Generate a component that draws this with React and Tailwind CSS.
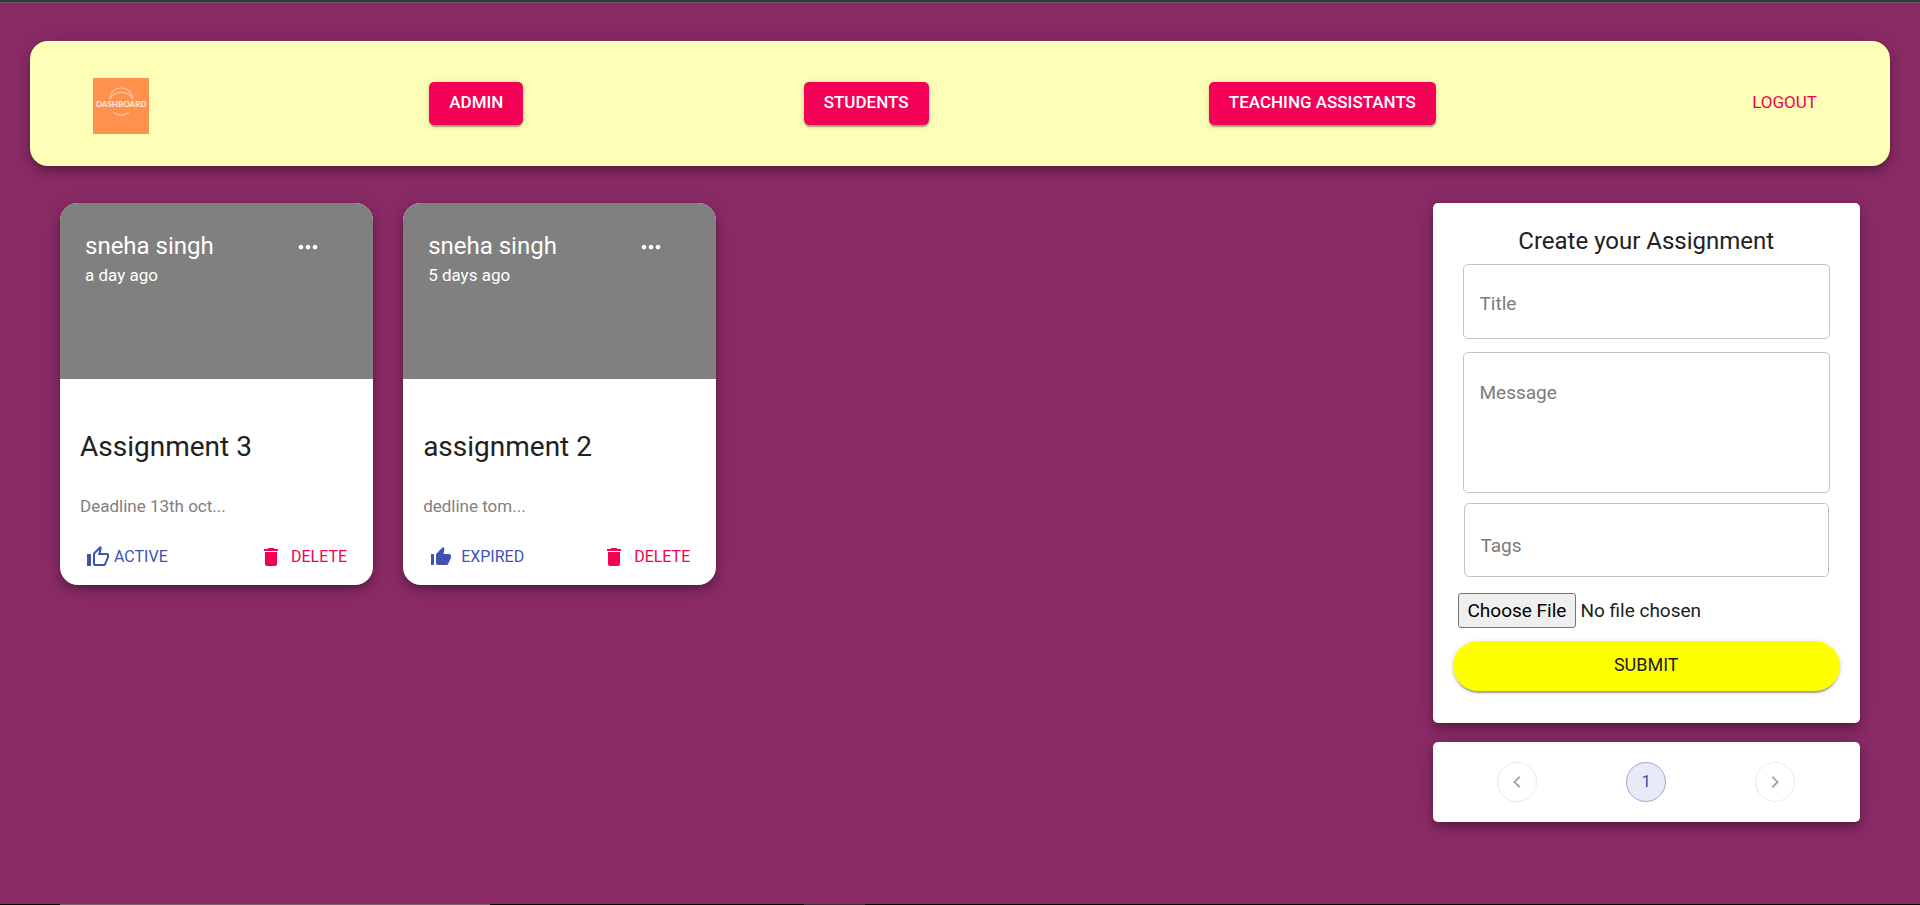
const ELEVATION =
  "shadow-[0_4px_6px_-1px_rgba(0,0,0,0.2),0_7px_12px_0_rgba(0,0,0,0.14),0_1px_22px_0_rgba(0,0,0,0.12)]";
const RAISED =
  "shadow-[0_4px_1px_-2px_rgba(0,0,0,0.2),0_2px_2px_0_rgba(0,0,0,0.14),0_1px_6px_0_rgba(0,0,0,0.12)]";

const POSTS = [
  { id: 1, author: "sneha singh", when: "a day ago", title: "Assignment 3", message: "Deadline 13th oct...", active: true },
  { id: 2, author: "sneha singh", when: "5 days ago", title: "assignment 2", message: "dedline tom...", active: false },
];

const ICONS = {
  more: "M6 10c-1.1 0-2 .9-2 2s.9 2 2 2 2-.9 2-2-.9-2-2-2zm12 0c-1.1 0-2 .9-2 2s.9 2 2 2 2-.9 2-2-.9-2-2-2zm-6 0c-1.1 0-2 .9-2 2s.9 2 2 2 2-.9 2-2-.9-2-2-2z",
  thumbOutline:
    "M9 21h9c.83 0 1.54-.5 1.84-1.22l3.02-7.05c.09-.23.14-.47.14-.73v-2c0-1.1-.9-2-2-2h-6.31l.95-4.57.03-.32c0-.41-.17-.79-.44-1.06L14.17 1 7.58 7.59C7.22 7.95 7 8.45 7 9v10c0 1.1.9 2 2 2zM9 9l4.34-4.34L12 10h9v2l-3 7H9V9zM1 9h4v12H1z",
  thumb:
    "M2 20h2c.55 0 1-.45 1-1v-9c0-.55-.45-1-1-1H2v11zm19.83-7.12c.11-.25.17-.52.17-.8V11c0-1.1-.9-2-2-2h-5.5l.92-4.65c.05-.22.02-.46-.08-.66-.23-.45-.52-.86-.88-1.22L14 2 7.59 8.41C7.21 8.79 7 9.3 7 9.83v7.84C7 18.95 8.05 20 9.34 20h8.11c.7 0 1.36-.37 1.72-.97l2.66-6.15z",
  trash: "M6 19c0 1.1.9 2 2 2h8c1.1 0 2-.9 2-2V7H6v12zM19 4h-3.5l-1-1h-5l-1 1H5v2h14V4z",
  before: "M15.41 7.41L14 6l-6 6 6 6 1.41-1.41L10.83 12z",
  next: "M10 6L8.59 7.41 13.17 12l-4.58 4.59L10 18l6-6z",
};

function Icon({ name, className = "size-6" }) {
  return (
    <svg viewBox="0 0 24 24" fill="currentColor" aria-hidden="true" className={`shrink-0 ${className}`}>
      <path d={ICONS[name]} />
    </svg>
  );
}

function Logo() {
  return (
    <svg viewBox="0 0 56 56" className="size-14 shrink-0" role="img" aria-label="Dashboard">
      <rect width="56" height="56" fill="#ff914d" />
      <g fill="none" stroke="#ffc4a0" strokeLinecap="round">
        <path d="M17 20.5a11.3 10.5 0 0 1 22.6 0" strokeWidth="1.1" />
        <path d="M17.4 20.5a11 7 0 0 1 21.8 0" strokeWidth="1.2" />
        <path d="M20.5 34.5q7.5 5.5 15 0" strokeWidth="1.3" />
      </g>
      <text x="28.2" y="29" textAnchor="middle" fill="#ffe6d6" className="font-['Lato',sans-serif] text-[8px] font-black">
        DASHBOARD
      </text>
    </svg>
  );
}

function NavButton({ children }) {
  return (
    <button type="button" className={`h-[43px] rounded-[5px] bg-[#f50057] px-5 pb-px text-[17px] font-medium text-white uppercase ${RAISED}`}>
      {children}
    </button>
  );
}

function Header() {
  return (
    <header className={`flex h-[125px] items-center justify-between rounded-[18px] bg-[#fdffb6] px-[63px] ${ELEVATION}`}>
      <a href="#home" className="mt-[5px]">
        <Logo />
      </a>
      <NavButton>Admin</NavButton>
      <NavButton>Students</NavButton>
      <NavButton>Teaching Assistants</NavButton>
      <button type="button" className="h-[43px] pr-2.5 pb-px pl-9 text-[17px] text-[#f50057] uppercase">
        Logout
      </button>
    </header>
  );
}

function PostCard({ post }) {
  return (
    <article className={`overflow-hidden rounded-[18px] bg-white ${ELEVATION}`}>
      <div className="flex h-44 items-start justify-between bg-[#808080] pt-7 pr-[51px] pl-[25px] text-white">
        <div>
          <h3 className="text-2xl leading-[30px]">{post.author}</h3>
          <p className="text-[17px] leading-7">{post.when}</p>
        </div>
        <button type="button" aria-label="More options" className="mt-0.5">
          <Icon name="more" className="size-7" />
        </button>
      </div>
      <h2 className="px-5 pt-12 text-[28px] leading-10 text-[#212121]">{post.title}</h2>
      <p className="px-5 pt-[27px] text-[17px] leading-6 text-[#808080]">{post.message}</p>
      <div className="flex justify-between px-[26px] pt-[27px] pb-4 text-base leading-6">
        <button type="button" className={`flex items-center text-[#3f51b5] uppercase ${post.active ? "gap-1" : "gap-2"}`}>
          <Icon name={post.active ? "thumbOutline" : "thumb"} />
          {post.active ? "Active" : "Expired"}
        </button>
        <button type="button" className="flex items-center gap-2 text-[#f50057] uppercase">
          <Icon name="trash" />
          Delete
        </button>
      </div>
    </article>
  );
}

const FIELD =
  "block w-full resize-none rounded-[5px] border border-[#c4c4c4] bg-transparent px-4 text-[19px] leading-6 text-[#212121] placeholder:text-[#7b7b7b] placeholder:opacity-100";

function AssignmentForm() {
  return (
    <form className={`rounded-[5px] bg-white px-5 pt-[22px] pb-8 ${ELEVATION}`} onSubmit={(e) => e.preventDefault()}>
      <h2 className="text-center text-2xl leading-8 text-[#212121]">Create your Assignment</h2>
      <div className="px-2.5 pt-[7px]">
        <input type="text" aria-label="Title" placeholder="Title" className={`${FIELD} h-[75px] pt-1`} />
        <textarea aria-label="Message" placeholder="Message" className={`${FIELD} mt-[13px] h-[141px] pt-7`} />
        <div className="mt-2.5 px-px">
          <input type="text" aria-label="Tags" placeholder="Tags" className={`${FIELD} h-[74px] pt-2.5`} />
        </div>
      </div>
      <input
        type="file"
        aria-label="Attachment"
        className="mx-[5px] mt-4 block h-[35px] text-[19px] leading-6 text-[#212121] file:mr-1 file:h-[35px] file:rounded-[3px] file:border file:border-solid file:border-[#767676] file:bg-[#efefef] file:px-[9px] file:text-black"
      />
      <button type="submit" className={`mt-[13px] h-[50px] w-full rounded-full bg-[#ffff00] pb-0.5 text-lg text-[#212121] uppercase ${RAISED}`}>
        Submit
      </button>
    </form>
  );
}

function Pager() {
  return (
    <nav aria-label="Pagination" className={`grid grid-cols-3 place-items-center rounded-[5px] bg-white p-5 text-[17px] ${ELEVATION}`}>
      <button type="button" disabled aria-label="Previous page" className="grid size-10 place-items-center rounded-full border border-[#ebebeb] text-[#a8a8a8]">
        <Icon name="before" />
      </button>
      <button type="button" aria-current="page" className="grid size-10 place-items-center rounded-full border border-[#9fa8da] bg-[#e8eaf6] text-[#3f51b5]">
        1
      </button>
      <button type="button" disabled aria-label="Next page" className="grid size-10 place-items-center rounded-full border border-[#ebebeb] text-[#a8a8a8]">
        <Icon name="next" />
      </button>
    </nav>
  );
}

export default function App() {
  return (
    <div className="flex min-h-screen flex-col bg-[#8a2b66] font-['Roboto',sans-serif]">
      <div className="h-[3px] border-b border-[#5f6368] bg-[#35363a]" />
      <div className="grow px-[30px] pt-[38px]">
        <Header />
        <main className="mt-[37px] grid grid-cols-4 items-start gap-[30px] px-[30px]">
          <section className="col-span-3 grid grid-cols-4 gap-[30px]">
            {POSTS.map((post) => (
              <PostCard key={post.id} post={post} />
            ))}
          </section>
          <aside className="flex flex-col gap-[19px]">
            <AssignmentForm />
            <Pager />
          </aside>
        </main>
      </div>
      <div className="flex h-px bg-black">
        <div className="ml-[60px] w-[430px] bg-[#76656f]" />
        <div className="ml-[314px] w-[61px] bg-[#3a3036]" />
      </div>
    </div>
  );
}
